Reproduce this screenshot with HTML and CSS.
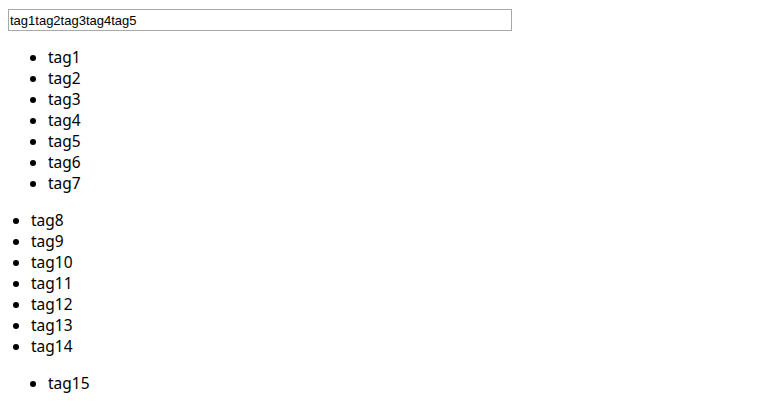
FILE: index.html
```html
<!DOCTYPE html>
<html lang="en">
<head>
  <meta charset="UTF-8" />
  <title>Tags</title>
  <link rel="stylesheet" href="styles.css">
</head>
<body>
  <input type="text" class="tag-input" value="tag1tag2tag3tag4tag5" />

  <ul class="tag-list">
    <li>tag1</li>
    <li>tag2</li>
    <li>tag3</li>
    <li>tag4</li>
    <li>tag5</li>
    <li>tag6</li>
    <li>tag7</li>
  </ul>

  <ul class="tag-list flat">
    <li>tag8</li>
    <li>tag9</li>
    <li>tag10</li>
    <li>tag11</li>
    <li>tag12</li>
    <li>tag13</li>
    <li>tag14</li>
  </ul>

  <ul class="tag-list">
    <li>tag15</li>
  </ul>
</body>
</html>
```

FILE: styles.css
```css
body {
  margin: 8px;
  background: #fff;
  color: #000;
  font-family: "Noto Sans", "Open Sans", sans-serif;
  font-size: 15.5px;
}

.tag-input {
  display: block;
  box-sizing: border-box;
  width: 504px;
  height: 22px;
  margin: 1px 0 0 0;
  padding: 0 1px;
  border: 1px solid #a9a9a9;
  font-family: "Liberation Sans", Arial, sans-serif;
  font-size: 13px;
  color: #000;
  outline: none;
}

.tag-list {
  margin: 16px 0;
  padding-left: 40px;
  line-height: 21px;
}

.tag-list.flat {
  padding-left: 23px;
}
```
